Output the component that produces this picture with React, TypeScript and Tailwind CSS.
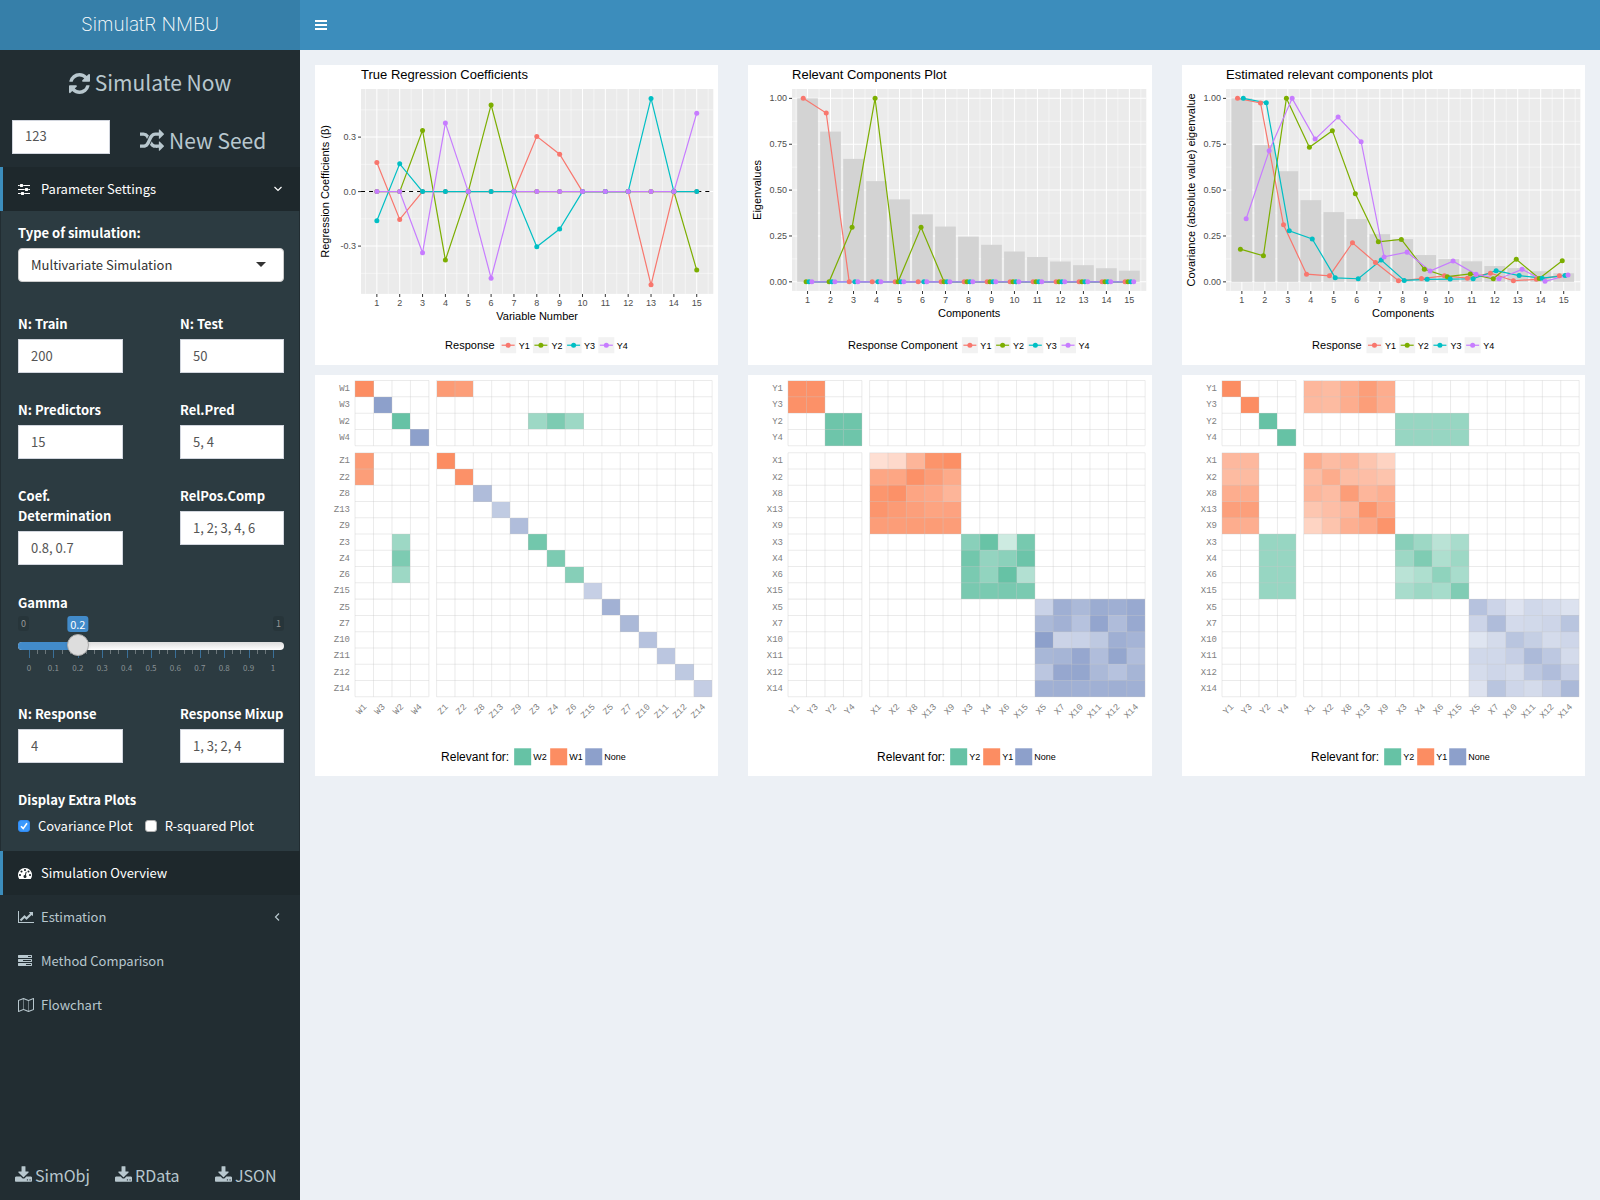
import React, { useId, useState } from "react";

const SERIES = ["#F8766D", "#7CAE00", "#00BFC4", "#C77CFF"];
const ORANGE = "#FC8D62";
const GREEN = "#66C2A5";
const BLUE = "#8DA0CB";

/* ---------- icons ---------- */

const ICONS = {
  refresh: {
    box: "128 128 1536 1536",
    d: "M1639 1056q0 5-1 7-64 268-268 434.5t-478 166.5q-146 0-282.5-55t-243.5-157l-129 129q-19 19-45 19t-45-19-19-45v-448q0-26 19-45t45-19h448q26 0 45 19t19 45-19 45l-137 137q71 66 161 102t187 36q134 0 250-65t186-179q11-17 53-117 8-23 30-23h192q13 0 22.5 9.5t9.5 22.5zm25-800v448q0 26-19 45t-45 19h-448q-26 0-45-19t-19-45 19-45l138-138q-148-137-349-137-134 0-250 65t-186 179q-11 17-53 117-8 23-30 23h-199q-13 0-22.5-9.5t-9.5-22.5v-7q65-268 270-434.5t480-166.5q146 0 284 55.5t245 156.5l130-129q19-19 45-19t45 19 19 45z",
  },
  random: {
    box: "0 0 1792 1792",
    d: "M666 481q-60 92-137 273-22-45-37-72.5t-40.5-63.5-51-56.5-63-35-81.5-14.5h-224q-14 0-23-9t-9-23v-192q0-14 9-23t23-9h224q250 0 410 225zm1126 799q0 14-9 23l-320 320q-9 9-23 9-13 0-22.5-9.5t-9.5-22.5v-192q-32 0-85 .5t-81 1-73-1-71-5-64-10.5-63-18.5-58-28.5-59-40-55-53.5-56-69.5q59-93 136-273 22 45 37 72.5t40.5 63.5 51 56.5 63 35 81.5 14.5h256v-192q0-14 9-23t23-9q12 0 24 10l319 319q9 9 9 23zm0-896q0 14-9 23l-320 320q-9 9-23 9-13 0-22.5-9.5t-9.5-22.5v-192h-256q-48 0-87 15t-69 45-51 61.5-45 77.5q-32 62-78 171-29 66-49.5 111t-54 105-64 100-74 83-90 68.5-106.5 42-128 16.5h-224q-14 0-23-9t-9-23v-192q0-14 9-23t23-9h224q48 0 87-15t69-45 51-61.5 45-77.5q32-62 78-171 29-66 49.5-111t54-105 64-100 74-83 90-68.5 106.5-42 128-16.5h256v-192q0-14 9-23t23-9q12 0 24 10l319 319q9 9 9 23z",
  },
  sliders: {
    box: "128 0 1536 1792",
    d: "M480 1408v128h-352v-128h352zm352-128q26 0 45 19t19 45v256q0 26-19 45t-45 19h-256q-26 0-45-19t-19-45v-256q0-26 19-45t45-19h256zm160-384v128h-864v-128h864zm-640-512v128h-224v-128h224zm1312 1024v128h-736v-128h736zm-960-1152q26 0 45 19t19 45v256q0 26-19 45t-45 19h-256q-26 0-45-19t-19-45v-256q0-26 19-45t45-19h256zm640 512q26 0 45 19t19 45v256q0 26-19 45t-45 19h-256q-26 0-45-19t-19-45v-256q0-26 19-45t45-19h256zm320 128v128h-224v-128h224zm0-512v128h-864v-128h864z",
  },
  download: {
    box: "64 0 1664 1536",
    d: "M1344 1344q0-26-19-45t-45-19-45 19-19 45 19 45 45 19 45-19 19-45zm256 0q0-26-19-45t-45-19-45 19-19 45 19 45 45 19 45-19 19-45zm128-224v320q0 40-28 68t-68 28h-1472q-40 0-68-28t-28-68v-320q0-40 28-68t68-28h465l135 136q58 56 136 56t136-56l136-136h464q40 0 68 28t28 68zm-325-569q17 41-14 70l-448 448q-18 19-45 19t-45-19l-448-448q-31-29-14-70 17-39 59-39h256v-448q0-26 19-45t45-19h256q26 0 45 19t19 45v448h256q42 0 59 39z",
  },
  lineChart: {
    box: "0 0 2048 1792",
    d: "M2048 1536v128h-2048v-1536h128v1408h1920zM1920 288v435q0 21-19.5 29.5t-35.5-7.5l-121-121-633 633q-10 10-23 10t-23-10l-233-233-416 416-192-192 585-585q10-10 23-10t23 10l233 233 464-464-121-121q-16-16-7.5-35.5t29.5-19.5h435q14 0 23 9t9 23z",
  },
  gauge: {
    box: "0 0 1792 1792",
    d: "M384 1152q0-53-37.5-90.5t-90.5-37.5-90.5 37.5-37.5 90.5 37.5 90.5 90.5 37.5 90.5-37.5 37.5-90.5zm192-448q0-53-37.5-90.5t-90.5-37.5-90.5 37.5-37.5 90.5 37.5 90.5 90.5 37.5 90.5-37.5 37.5-90.5zm428 481l101-382q6-26-7.5-48.5t-38.5-29.5-48 6.5-30 39.5l-101 382q-60 5-107 43.5t-63 98.5q-20 77 20 146t117 89 146-20 89-117q16-60-6-117t-72-91zm660-33q0-53-37.5-90.5t-90.5-37.5-90.5 37.5-37.5 90.5 37.5 90.5 90.5 37.5 90.5-37.5 37.5-90.5zm-640-640q0-53-37.5-90.5t-90.5-37.5-90.5 37.5-37.5 90.5 37.5 90.5 90.5 37.5 90.5-37.5 37.5-90.5zm448 192q0-53-37.5-90.5t-90.5-37.5-90.5 37.5-37.5 90.5 37.5 90.5 90.5 37.5 90.5-37.5 37.5-90.5zm320 448q0 261-141 483-19 29-54 29h-1402q-35 0-54-29-141-221-141-483 0-182 71-348t191-286 286-191 348-71 348 71 286 191 191 286 71 348z",
  },
  tasks: {
    box: "0 0 1792 1792",
    d: "M1024 1408h640v-128h-640v128zm-384-512h1024v-128h-1024v128zm640-512h384v-128h-384v128zm512 832v256q0 26-19 45t-45 19h-1664q-26 0-45-19t-19-45v-256q0-26 19-45t45-19h1664q26 0 45 19t19 45zm0-512v256q0 26-19 45t-45 19h-1664q-26 0-45-19t-19-45v-256q0-26 19-45t45-19h1664q26 0 45 19t19 45zm0-512v256q0 26-19 45t-45 19h-1664q-26 0-45-19t-19-45v-256q0-26 19-45t45-19h1664q26 0 45 19t19 45z",
  },
  map: {
    box: "0 0 2048 1792",
    d: "M2020 11q28 20 28 53v1408q0 20-11 36t-29 23l-640 256q-24 11-48 0l-616-246-616 246q-10 5-24 5-19 0-36-11-28-20-28-53v-1408q0-20 11-36t29-23l640-256q24-11 48 0l616 246 616-246q32-13 60 6zM736 146v1270l576 230v-1270zM128 363v1270l544-217v-1270zM1920 1429v-1270l-544 217v1270z",
  },
};

function Icon({ name, className }: { name: keyof typeof ICONS; className: string }) {
  const icon = ICONS[name];
  return (
    <svg viewBox={icon.box} className={className} fill="currentColor" fillRule={name === "map" ? "evenodd" : "nonzero"} aria-hidden="true">
      <path d={icon.d} />
    </svg>
  );
}

/* ---------- line and bar charts ---------- */

type ChartProps = {
  title: string;
  xTitle: string;
  yTitle: string;
  legendTitle: string;
  legendX: number;
  keyX: number;
  left: number;
  right: number;
  bottom: number;
  x1: number;
  step: number;
  y0: number;
  unit: number;
  yTicks: [number, string][];
  yMinor: number[];
  bars?: number[];
  dodge: number[];
  series: number[][];
  zeroLine?: boolean;
  yTitleX: number;
};

function Chart(p: ChartProps) {
  const top = 24;
  const px = (i: number, s: number) => p.x1 + (i + p.dodge[s]) * p.step;
  const py = (v: number) => p.y0 - v * p.unit;
  const idx = Array.from({ length: 15 }, (_, i) => i);
  const mid = (p.left + p.right) / 2;
  return (
    <svg viewBox="0 0 403 300" className="block h-auto w-full bg-white font-['Liberation_Sans',sans-serif]" role="img" aria-label={p.title}>
      <text x={p.left} y="14" fontSize="13">{p.title}</text>
      <rect x={p.left} y={top} width={p.right - p.left} height={p.bottom - top} fill="#EBEBEB" />
      <g stroke="#fff">
        {p.yMinor.map((v) => (
          <line key={v} x1={p.left} x2={p.right} y1={py(v)} y2={py(v)} strokeWidth="0.5" />
        ))}
        {[-1, ...idx].map((i) => (
          <line key={i} x1={p.x1 + (i + 0.5) * p.step} x2={p.x1 + (i + 0.5) * p.step} y1={top} y2={p.bottom} strokeWidth="0.5" />
        ))}
        {p.yTicks.map(([v]) => (
          <line key={v} x1={p.left} x2={p.right} y1={py(v)} y2={py(v)} />
        ))}
        {idx.map((i) => (
          <line key={i} x1={p.x1 + i * p.step} x2={p.x1 + i * p.step} y1={top} y2={p.bottom} />
        ))}
      </g>
      {p.bars?.map((v, i) => (
        <rect key={i} x={p.x1 + (i - 0.45) * p.step} width={p.step * 0.9} y={py(v)} height={v * p.unit} fill="#D3D3D3" />
      ))}
      {p.zeroLine && <line x1={p.left} x2={p.right} y1={p.y0} y2={p.y0} stroke="#000" strokeDasharray="4 4" />}
      {p.series.map((vals, s) => (
        <polyline
          key={s}
          points={vals.map((v, i) => `${px(i, s)},${py(v)}`).join(" ")}
          fill="none"
          stroke={SERIES[s]}
          strokeWidth="1.2"
        />
      ))}
      {p.series.map((vals, s) => (
        <g key={s} fill={SERIES[s]}>
          {vals.map((v, i) => (
            <circle key={i} cx={px(i, s)} cy={py(v)} r="2.5" />
          ))}
        </g>
      ))}
      <g stroke="#333">
        {p.yTicks.map(([v]) => (
          <line key={v} x1={p.left - 3} x2={p.left} y1={py(v)} y2={py(v)} />
        ))}
        {idx.map((i) => (
          <line key={i} x1={p.x1 + i * p.step} x2={p.x1 + i * p.step} y1={p.bottom} y2={p.bottom + 3} />
        ))}
      </g>
      <g fill="#4D4D4D" fontSize="9">
        {p.yTicks.map(([v, label]) => (
          <text key={label} x={p.left - 5} y={py(v) + 3} textAnchor="end">{label}</text>
        ))}
        {idx.map((i) => (
          <text key={i} x={p.x1 + i * p.step} y={p.bottom + 12} textAnchor="middle">{i + 1}</text>
        ))}
      </g>
      <text x={mid} y={p.bottom + 26} fontSize="11" textAnchor="middle">{p.xTitle}</text>
      <text transform={`translate(${p.yTitleX} ${(top + p.bottom) / 2}) rotate(-90)`} fontSize="11" textAnchor="middle">{p.yTitle}</text>
      <text x={p.legendX} y="284" fontSize="11">{p.legendTitle}</text>
      {SERIES.map((c, s) => (
        <g key={c} transform={`translate(${p.keyX + s * 32.7} 272)`}>
          <rect width="16" height="16" fill="#F2F2F2" />
          <line x1="1.5" x2="14.5" y1="8" y2="8" stroke={c} strokeWidth="1.2" />
          <circle cx="8" cy="8" r="2.5" fill={c} />
          <text x="18.5" y="11.5" fontSize="9">{`Y${s + 1}`}</text>
        </g>
      ))}
    </svg>
  );
}

/* ---------- heat maps ---------- */

type Block = { row: number; col: number; color: string; alpha: number[][] };

type HeatProps = {
  label: string;
  names: string[];
  blocks: Block[];
  legend: { text: string; color: string; x: number }[];
  legendX: number;
};

const colX = (c: number) => (c < 4 ? 40 + c * 18.45 : 121.5 + (c - 4) * 18.35);
const rowY = (r: number) => (r < 4 ? 5.5 + r * 16.3 : 77.7 + (r - 4) * 16.25);

function HeatMap({ label, names, blocks, legend, legendX }: HeatProps) {
  const xs = names.map((_, i) => i);
  return (
    <svg viewBox="0 0 403 400" className="block h-auto w-full bg-white font-['Liberation_Sans',sans-serif]" role="img" aria-label={label}>
      <g shapeRendering="crispEdges">
        {blocks.map((b, k) =>
          b.alpha.map((line, r) =>
            line.map((a, c) => (
              <rect
                key={`${k}-${r}-${c}`}
                x={colX(b.col + c)}
                y={rowY(b.row + r)}
                width={b.col + c < 4 ? 18.45 : 18.35}
                height={b.row + r < 4 ? 16.3 : 16.25}
                fill={b.color}
                fillOpacity={a}
              />
            ))
          )
        )}
      </g>
      <g stroke="#C8C8C8" strokeOpacity="0.36">
        {xs.map((i) => (
          <path key={i} d={`M${colX(i)} 5.5V70.7M${colX(i)} 77.7V321.5M40 ${rowY(i)}H113.8M121.5 ${rowY(i)}H396.8`} />
        ))}
        <path d="M113.8 5.5V70.7M113.8 77.7V321.5M396.8 5.5V70.7M396.8 77.7V321.5M40 70.7H113.8M121.5 70.7H396.8M40 321.5H113.8M121.5 321.5H396.8" />
      </g>
      <g fill="#7F7F7F" fontSize="9" textAnchor="end" className="font-['Liberation_Mono',monospace]">
        {names.map((n, i) => (
          <text key={n} x="35" y={rowY(i) + 10.5}>{n}</text>
        ))}
        {names.map((n, i) => (
          <text key={n} transform={`translate(${colX(i) + 12} 332) rotate(-45)`}>{n}</text>
        ))}
      </g>
      <text x={legendX} y="386" fontSize="12">Relevant for:</text>
      {legend.map((l) => (
        <g key={l.text} transform={`translate(${l.x} 373)`}>
          <rect width="17" height="17" fill={l.color} />
          <text x="19" y="12" fontSize="9">{l.text}</text>
        </g>
      ))}
    </svg>
  );
}

/* ---------- data ---------- */

const Z15 = Array.from({ length: 15 }, () => 0);
const put = (values: Record<number, number>) => Z15.map((_, i) => values[i + 1] ?? 0);
const y1 = put({ 1: 0.16, 2: -0.153, 8: 0.304, 9: 0.206, 13: -0.513 });
const y2 = put({ 3: 0.337, 4: -0.377, 6: 0.477, 15: -0.432 });
const PERCENT: [number, string][] = [
  [0, "0.00"],
  [0.25, "0.25"],
  [0.5, "0.50"],
  [0.75, "0.75"],
  [1, "1.00"],
];
const MINOR = [0.125, 0.375, 0.625, 0.875];
const DODGE = [-0.1875, -0.0625, 0.0625, 0.1875];

const one = (row: number, col: number, color: string, a: number): Block => ({ row, col, color, alpha: [[a]] });
const rep = (rows: number, cols: number, a: number) => Array.from({ length: rows }, () => Array.from({ length: cols }, () => a));

const TAIL = ["1", "2", "8", "13", "9", "3", "4", "6", "15", "5", "7", "10", "11", "12", "14"];
const wz = ["W1", "W3", "W2", "W4", ...TAIL.map((t) => "Z" + t)];
const yx = ["Y1", "Y3", "Y2", "Y4", ...TAIL.map((t) => "X" + t)];

const blocksWZ: Block[] = [
  one(0, 0, ORANGE, 1),
  one(1, 1, BLUE, 1),
  one(2, 2, GREEN, 1),
  one(3, 3, BLUE, 1),
  { row: 0, col: 4, color: ORANGE, alpha: [[0.88, 0.85]] },
  { row: 2, col: 9, color: GREEN, alpha: [[0.64, 0.85, 0.64]] },
  { row: 4, col: 0, color: ORANGE, alpha: [[0.88], [0.85]] },
  { row: 9, col: 2, color: GREEN, alpha: [[0.64], [0.85], [0.64]] },
  one(4, 4, ORANGE, 1),
  one(5, 5, ORANGE, 0.96),
  one(6, 6, BLUE, 0.7),
  one(7, 7, BLUE, 0.55),
  one(8, 8, BLUE, 0.69),
  one(9, 9, GREEN, 0.92),
  one(10, 10, GREEN, 0.86),
  one(11, 11, GREEN, 0.79),
  one(12, 12, BLUE, 0.5),
  one(13, 13, BLUE, 0.82),
  one(14, 14, BLUE, 0.74),
  one(15, 15, BLUE, 0.64),
  one(16, 16, BLUE, 0.6),
  one(17, 17, BLUE, 0.57),
  one(18, 18, BLUE, 0.52),
];

const blocksTrue: Block[] = [
  { row: 0, col: 0, color: ORANGE, alpha: rep(2, 2, 0.96) },
  { row: 2, col: 2, color: GREEN, alpha: rep(2, 2, 0.95) },
  {
    row: 4,
    col: 4,
    color: ORANGE,
    alpha: [
      [0.28, 0.33, 0.65, 0.94, 0.98],
      [0.78, 0.78, 0.96, 0.86, 0.75],
      [0.92, 0.96, 0.79, 0.76, 0.65],
      [0.93, 0.88, 0.84, 0.8, 0.81],
      [0.86, 0.86, 0.87, 0.87, 0.86],
    ],
  },
  {
    row: 9,
    col: 9,
    color: GREEN,
    alpha: [
      [0.77, 0.99, 0.33, 0.89],
      [0.92, 0.7, 0.76, 0.96],
      [0.87, 0.71, 1, 0.5],
      [0.88, 0.87, 0.88, 0.87],
    ],
  },
  {
    row: 13,
    col: 13,
    color: BLUE,
    alpha: [
      [0.47, 0.84, 0.74, 0.88, 0.84, 0.9],
      [0.74, 0.82, 0.64, 0.95, 0.7, 0.9],
      [1, 0.46, 0.47, 0.57, 0.84, 0.79],
      [0.76, 0.78, 0.92, 0.69, 0.94, 0.69],
      [0.6, 0.92, 0.94, 0.74, 0.64, 0.78],
      [0.83, 0.84, 0.83, 0.83, 0.84, 0.83],
    ],
  },
];

const blocksEst: Block[] = [
  one(0, 0, ORANGE, 1),
  one(1, 1, ORANGE, 1),
  one(2, 2, GREEN, 1),
  one(3, 3, GREEN, 1),
  { row: 0, col: 4, color: ORANGE, alpha: [[0.63, 0.6, 0.72, 0.85, 0.72], [0.61, 0.6, 0.72, 0.85, 0.71]] },
  { row: 2, col: 9, color: GREEN, alpha: rep(2, 4, 0.68) },
  { row: 4, col: 0, color: ORANGE, alpha: [[0.62, 0.62], [0.6, 0.6], [0.72, 0.72], [0.84, 0.84], [0.72, 0.71]] },
  { row: 9, col: 2, color: GREEN, alpha: rep(4, 2, 0.68) },
  {
    row: 4,
    col: 4,
    color: ORANGE,
    alpha: [
      [0.72, 0.59, 0.64, 0.51, 0.39],
      [0.59, 0.73, 0.58, 0.57, 0.52],
      [0.64, 0.59, 0.86, 0.64, 0.7],
      [0.5, 0.57, 0.64, 0.92, 0.77],
      [0.38, 0.52, 0.7, 0.77, 0.94],
    ],
  },
  {
    row: 9,
    col: 9,
    color: GREEN,
    alpha: [
      [0.78, 0.64, 0.45, 0.57],
      [0.64, 0.84, 0.53, 0.64],
      [0.45, 0.53, 0.73, 0.57],
      [0.57, 0.64, 0.58, 0.83],
    ],
  },
  {
    row: 13,
    col: 13,
    color: BLUE,
    alpha: [
      [0.64, 0.45, 0.29, 0.41, 0.37, 0.31],
      [0.45, 0.7, 0.39, 0.4, 0.44, 0.61],
      [0.28, 0.38, 0.61, 0.51, 0.38, 0.43],
      [0.41, 0.41, 0.5, 0.73, 0.58, 0.38],
      [0.37, 0.43, 0.38, 0.58, 0.69, 0.5],
      [0.3, 0.61, 0.43, 0.38, 0.5, 0.74],
    ],
  },
];

/* ---------- sidebar ---------- */

const INPUT = "h-[34px] w-full min-w-0 border border-[#d2d6de] bg-white px-3 pb-[2px] text-[13px] text-[#555] outline-none";

function Field({ label, value }: { label: string; value: string }) {
  const id = useId();
  return (
    <div className="min-w-0">
      <label htmlFor={id} className="mb-[5px] block text-[13px] leading-5 font-bold text-white">{label}</label>
      <input id={id} type="text" defaultValue={value} className={INPUT} />
    </div>
  );
}

function FieldRow({ children }: { children: React.ReactNode }) {
  return <div className="grid grid-cols-[105fr_104fr] gap-x-[57px]">{children}</div>;
}

function Check({ label, on }: { label: string; on: boolean }) {
  const [checked, setChecked] = useState(on);
  return (
    <label className="flex items-center gap-2 text-[13px] leading-5 text-white">
      <span className="relative flex size-3">
        <input
          type="checkbox"
          checked={checked}
          onChange={(e) => setChecked(e.target.checked)}
          className="size-3 appearance-none rounded-[3px] border border-[#b0b0b0] bg-white checked:border-[#2f8bf5] checked:bg-[#3b99fc]"
        />
        {checked && (
          <svg viewBox="0 0 12 12" className="pointer-events-none absolute inset-0" fill="none" stroke="#fff" strokeWidth="1.6" aria-hidden="true">
            <path d="M3 6.3 5.2 8.6 9 3.2" />
          </svg>
        )}
      </span>
      {label}
    </label>
  );
}

function GammaSlider() {
  const [value, setValue] = useState(0.2);
  const at = (v: number) => `calc(11px + (100% - 22px) * ${v})`;
  const ticks = Array.from({ length: 31 }, (_, i) => i);
  return (
    <div className="pt-px">
      <label htmlFor="gamma" className="block text-[13px] leading-5 font-bold text-white">Gamma</label>
      <div className="relative mt-[3px] flex h-4 items-start justify-between text-[9px] leading-[15px] text-[#999]">
        <span className="rounded-[3px] bg-black/10 px-[3px]">0</span>
        <span className="rounded-[3px] bg-black/10 px-[3px]">1</span>
        <output
          htmlFor="gamma"
          className="absolute top-0 -translate-x-1/2 rounded-[3px] bg-[#428bca] px-[3px] text-[11px] leading-4 text-white"
          style={{ left: at(value) }}
        >
          {value}
        </output>
      </div>
      <div className="relative mt-[10px] h-2">
        <div className="h-2 overflow-hidden rounded-full bg-linear-to-b from-[#dedede] to-white">
          <div className="h-2 bg-[#428bca]" style={{ width: at(value) }} />
        </div>
        <input
          id="gamma"
          type="range"
          min="0"
          max="1"
          step="0.1"
          value={value}
          onChange={(e) => setValue(Number(e.target.value))}
          className="absolute inset-x-0 -top-2 z-10 h-[22px] w-full appearance-none bg-transparent [&::-webkit-slider-thumb]:size-[22px] [&::-webkit-slider-thumb]:appearance-none [&::-webkit-slider-thumb]:rounded-full [&::-webkit-slider-thumb]:border [&::-webkit-slider-thumb]:border-[#aaa] [&::-webkit-slider-thumb]:bg-[#ddd] [&::-webkit-slider-thumb]:shadow"
        />
      </div>
      <svg className="block h-[27px] w-full" viewBox="0 0 266 27" aria-hidden="true">
        {ticks.map((i) => {
          const x = Math.round(11 + (244 * i) / 30) + 0.5;
          return i % 3 === 0 ? (
            <line key={i} x1={x} x2={x} y1="0" y2="8" stroke="#3a7099" />
          ) : (
            <line key={i} x1={x} x2={x} y1="0" y2="4" stroke="#6c777b" />
          );
        })}
        {ticks.slice(0, 11).map((i) => (
          <text key={i} x={11 + 24.4 * i} y="21" fontSize="8" fill="#8a9296" textAnchor="middle">{i / 10}</text>
        ))}
      </svg>
    </div>
  );
}

function MenuItem({ icon, label, active, iconClass, children }: {
  icon: keyof typeof ICONS;
  label: string;
  active?: boolean;
  iconClass: string;
  children?: React.ReactNode;
}) {
  const tone = active ? "border-[#3c8dbc] bg-[#1e282c] text-white" : "border-transparent text-[#b8c7ce]";
  return (
    <a href="#" className={`flex h-11 items-center border-l-[3px] pr-4 pl-[15px] text-[13px] ${tone}`}>
      <span className="flex w-[23px] items-center"><Icon name={icon} className={iconClass} /></span>
      <span className="flex-1">{label}</span>
      {children}
    </a>
  );
}

function Sidebar() {
  return (
    <aside className="flex w-[300px] shrink-0 flex-col bg-[#222d32] text-[#b8c7ce]">
      <button type="button" className="mt-[13px] flex h-10 items-center justify-center gap-[5px] text-[21px]">
        <Icon name="refresh" className="size-[21px]" />
        Simulate Now
      </button>
      <div className="mt-[14px] mb-4 grid h-[34px] grid-cols-[98px_1fr] items-center pl-3">
        <input type="text" aria-label="Seed" defaultValue="123" className={INPUT} />
        <button type="button" className="mt-2 ml-[30px] flex items-center gap-[5px] text-[21px]">
          <Icon name="random" className="size-6" />
          New Seed
        </button>
      </div>
      <nav>
        <MenuItem icon="sliders" label="Parameter Settings" active iconClass="h-[14px] w-3">
          <svg viewBox="0 0 10 10" className="mr-[1px] size-[10px]" fill="none" stroke="currentColor" strokeWidth="1.2" aria-hidden="true">
            <path d="M1.5 3 5 6.5 8.5 3" />
          </svg>
        </MenuItem>
        <form className="border-x border-[#222d32] bg-[#2c3b41] pt-3 pr-[15px] pb-[15px] pl-[17px]">
          <label htmlFor="sim-type" className="mb-[5px] block text-[13px] leading-5 font-bold text-white">Type of simulation:</label>
          <div className="relative">
            <select id="sim-type" className="h-[34px] w-full appearance-none rounded border border-[#ccc] bg-white px-3 text-[13px] text-[#333] outline-none">
              <option>Multivariate Simulation</option>
            </select>
            <span className="pointer-events-none absolute top-[14px] right-[18px] border-x-[5px] border-t-[5px] border-x-transparent border-t-[#333]" />
          </div>
          <div className="mt-8 flex flex-col gap-[27px]">
            <FieldRow>
              <Field label="N: Train" value="200" />
              <Field label="N: Test" value="50" />
            </FieldRow>
            <FieldRow>
              <Field label="N: Predictors" value="15" />
              <Field label="Rel.Pred" value="5, 4" />
            </FieldRow>
            <FieldRow>
              <Field label="Coef. Determination" value="0.8, 0.7" />
              <Field label="RelPos.Comp" value="1, 2; 3, 4, 6" />
            </FieldRow>
            <GammaSlider />
            <FieldRow>
              <Field label="N: Response" value="4" />
              <Field label={"Response\u00a0Mixup"} value="1, 3; 2, 4" />
            </FieldRow>
            <fieldset>
              <legend className="mb-[6px] text-[13px] leading-5 font-bold text-white">Display Extra Plots</legend>
              <div className="flex gap-3">
                <Check label="Covariance Plot" on />
                <Check label="R-squared Plot" on={false} />
              </div>
            </fieldset>
          </div>
        </form>
        <MenuItem icon="gauge" label="Simulation Overview" active iconClass="size-[14px]" />
        <MenuItem icon="lineChart" label="Estimation" iconClass="h-[14px] w-4">
          <svg viewBox="0 0 10 10" className="mr-[2px] size-[10px]" fill="none" stroke="currentColor" strokeWidth="1.2" aria-hidden="true">
            <path d="M7 1.5 3.5 5 7 8.5" />
          </svg>
        </MenuItem>
        <MenuItem icon="tasks" label="Method Comparison" iconClass="size-[14px]" />
        <MenuItem icon="map" label="Flowchart" iconClass="h-[14px] w-4" />
      </nav>
      <div className="mt-auto grid grid-cols-3 pb-[11px] text-[16px] leading-7">
        {["SimObj", "RData", "JSON"].map((name) => (
          <a key={name} href="#" className="flex items-center gap-[3px] pl-[15px]">
            <Icon name="download" className="mb-[3px] h-4 w-[17px]" />
            {name}
          </a>
        ))}
      </div>
    </aside>
  );
}

/* ---------- page ---------- */

export default function App() {
  return (
    <div className="flex min-h-screen flex-col bg-[#ecf0f5] font-['Noto_Sans_CJK_SC',sans-serif]">
      <header className="flex h-[50px] bg-[#3c8dbc] text-white">
        <a href="#" className="flex w-[300px] items-center justify-center bg-[#367fa9] font-['Inter',sans-serif] text-[19px] font-extralight">
          SimulatR NMBU
        </a>
        <button type="button" aria-label="Toggle navigation" className="flex w-[42px] items-center justify-center">
          <svg viewBox="0 0 12 10" className="h-[10px] w-3" fill="currentColor" aria-hidden="true">
            <path d="M0 0h12v2H0zM0 4h12v2H0zM0 8h12v2H0z" />
          </svg>
        </button>
      </header>
      <div className="flex flex-1">
        <Sidebar />
        <main className="grid flex-1 grid-cols-3 content-start gap-x-[30px] gap-y-[10px] p-[15px]">
          <Chart
            title="True Regression Coefficients"
            xTitle="Variable Number"
            yTitle="Regression Coefficients (β)"
            yTitleX={14}
            legendTitle="Response"
            legendX={130}
            keyX={185}
            left={46}
            right={398}
            bottom={228.7}
            x1={61.8}
            step={22.83}
            y0={126.5}
            unit={181.5}
            yTicks={[[-0.3, "-0.3"], [0, "0.0"], [0.3, "0.3"]]}
            yMinor={[-0.45, -0.15, 0.15, 0.45]}
            dodge={[0, 0, 0, 0]}
            series={[y1, y2, y1.map((v) => -v), y2.map((v) => -v)]}
            zeroLine
          />
          <Chart
            title="Relevant Components Plot"
            xTitle="Components"
            yTitle="Eigenvalues"
            yTitleX={13}
            legendTitle="Response Component"
            legendX={100}
            keyX={213.7}
            left={44}
            right={398}
            bottom={225.7}
            x1={59.5}
            step={22.97}
            y0={216.67}
            unit={183.33}
            yTicks={PERCENT}
            yMinor={MINOR}
            dodge={DODGE}
            bars={Z15.map((_, i) => Math.exp(-0.2 * i))}
            series={[put({ 1: 1, 2: 0.92 }), put({ 3: 0.297, 4: 1, 6: 0.297 }), Z15, Z15]}
          />
          <Chart
            title="Estimated relevant components plot"
            xTitle="Components"
            yTitle="Covariance (absolute value) eigenvalue"
            yTitleX={13}
            legendTitle="Response"
            legendX={130}
            keyX={184.3}
            left={44}
            right={398}
            bottom={225.7}
            x1={59.8}
            step={22.97}
            y0={216.67}
            unit={183.33}
            yTicks={PERCENT}
            yMinor={MINOR}
            dodge={DODGE}
            bars={[1, 0.745, 0.603, 0.445, 0.38, 0.342, 0.26, 0.233, 0.146, 0.124, 0.112, 0.086, 0.075, 0.058, 0.047]}
            series={[
              [1, 0.975, 0.311, 0.042, 0.033, 0.213, 0.105, 0.006, 0.018, 0.033, 0.02, 0.047, 0.006, 0.014, 0.033],
              [0.178, 0.142, 1, 0.733, 0.824, 0.48, 0.218, 0.231, 0.069, 0.028, 0.043, 0.017, 0.123, 0.018, 0.115],
              [1, 0.976, 0.278, 0.234, 0.022, 0.017, 0.119, 0.008, 0.014, 0.015, 0.017, 0.061, 0.034, 0.02, 0.034],
              [0.344, 0.714, 1, 0.778, 0.898, 0.764, 0.136, 0.162, 0.059, 0.113, 0.041, 0.017, 0.068, 0.003, 0.037],
            ]}
          />
          <HeatMap
            label="Covariance of latent components"
            names={wz}
            blocks={blocksWZ}
            legendX={126}
            legend={[
              { text: "W2", color: GREEN, x: 199 },
              { text: "W1", color: ORANGE, x: 235 },
              { text: "None", color: BLUE, x: 270 },
            ]}
          />
          <HeatMap
            label="Rotation matrix"
            names={yx}
            blocks={blocksTrue}
            legendX={129}
            legend={[
              { text: "Y2", color: GREEN, x: 202 },
              { text: "Y1", color: ORANGE, x: 235 },
              { text: "None", color: BLUE, x: 267 },
            ]}
          />
          <HeatMap
            label="Covariance of predictors and responses"
            names={yx}
            blocks={blocksEst}
            legendX={129}
            legend={[
              { text: "Y2", color: GREEN, x: 202 },
              { text: "Y1", color: ORANGE, x: 235 },
              { text: "None", color: BLUE, x: 267 },
            ]}
          />
        </main>
      </div>
    </div>
  );
}
